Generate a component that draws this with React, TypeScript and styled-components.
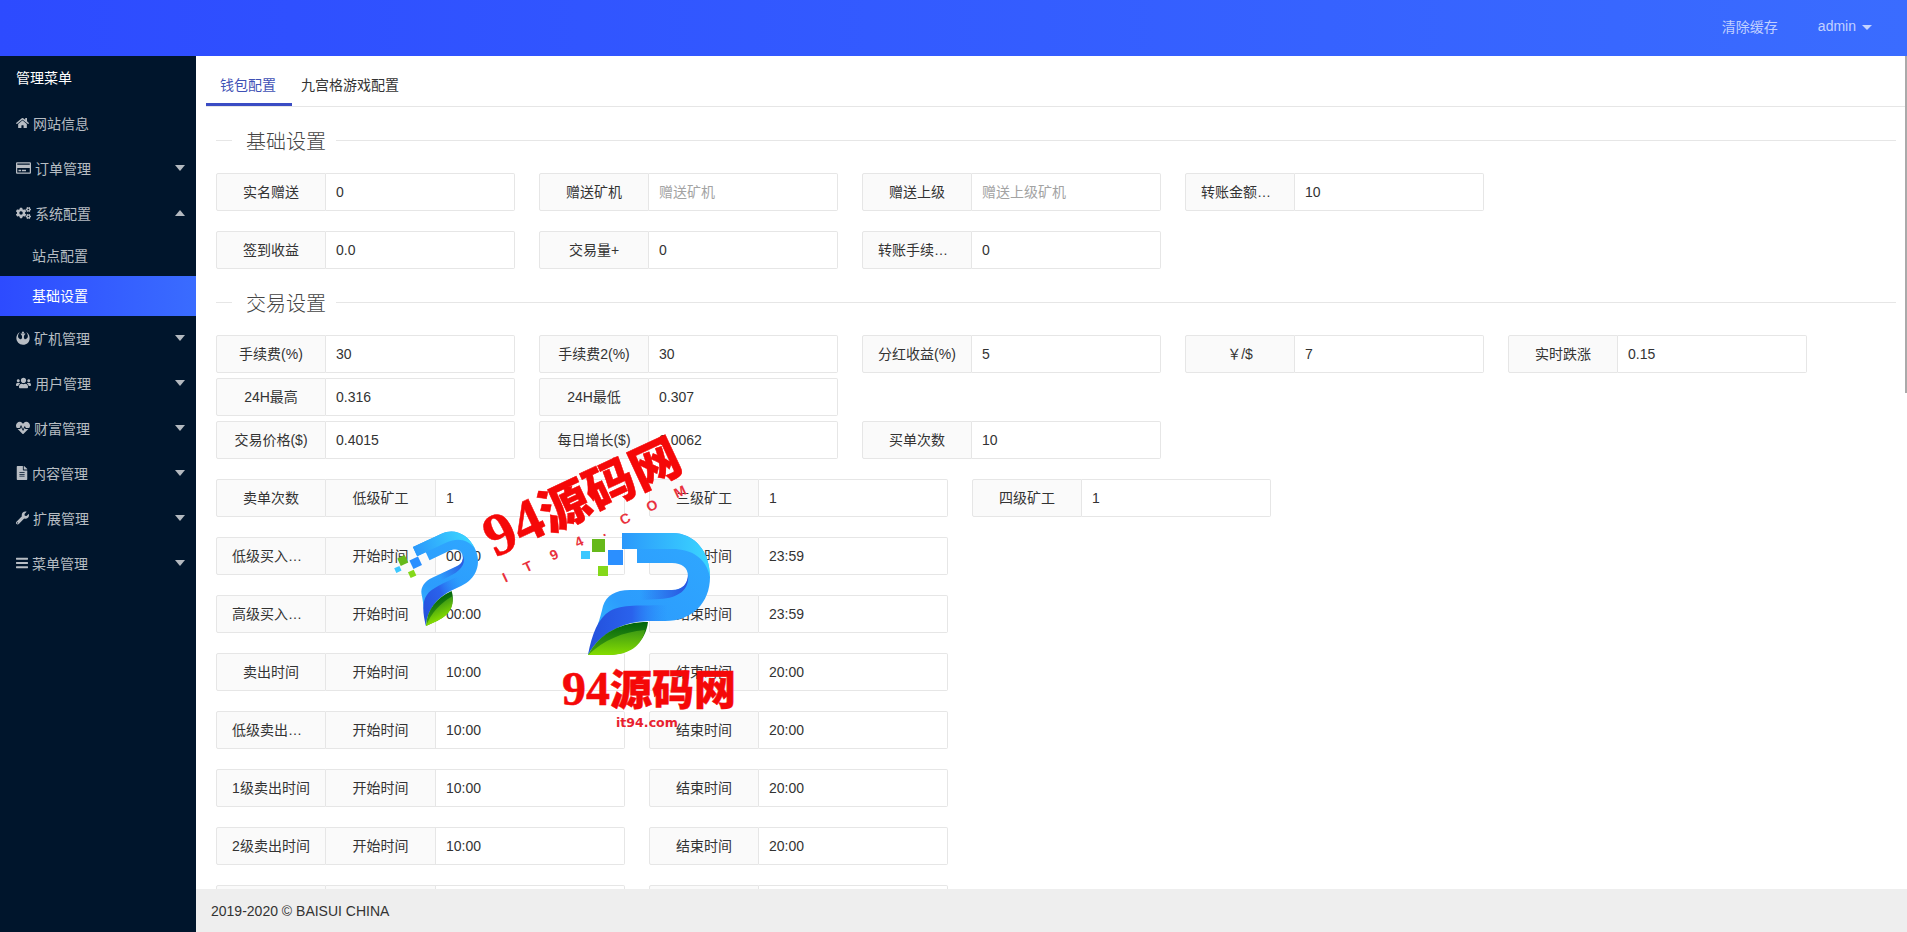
import React from "react";
import styled, { createGlobalStyle } from "styled-components";
import {
  FaHome,
  FaRegCreditCard,
  FaCogs,
  FaRebel,
  FaUsers,
  FaHeartbeat,
  FaFileAlt,
  FaWrench,
  FaBars,
} from "react-icons/fa";

const Global = createGlobalStyle`
  html, body, #root { margin: 0; padding: 0; height: 100%; overflow: hidden; }
  body {
    font-family: "Liberation Sans", "Noto Sans CJK SC", sans-serif;
    font-size: 14px;
    color: #333;
    background: #fff;
  }
  * { box-sizing: border-box; }
`;

const Page = styled.div`
  position: relative;
  display: flex;
  flex-direction: column;
  height: 932px;
  overflow: hidden;
`;

const Header = styled.header`
  flex: 0 0 56px;
  display: flex;
  justify-content: flex-end;
  align-items: flex-start;
  padding-right: 35px;
  background: linear-gradient(90deg, #2d4bff, #3a6cff);
`;

const HeaderLink = styled.a<{ $gap?: number }>`
  display: flex;
  align-items: center;
  height: 52px;
  margin-left: ${(p) => p.$gap ?? 0}px;
  color: rgba(255, 255, 255, 0.7);
`;

const Caret = styled.i<{ $up?: boolean }>`
  display: block;
  width: 0;
  height: 0;
  border-left: 5.5px solid transparent;
  border-right: 5.5px solid transparent;
  border-top: ${(p) => (p.$up ? "0" : "6px solid rgba(255,255,255,.7)")};
  border-bottom: ${(p) => (p.$up ? "6px solid rgba(255,255,255,.7)" : "0")};
`;

const HeaderCaret = styled(Caret)`
  margin: 2px 0 0 6px;
  border-left-width: 5px;
  border-right-width: 5px;
  border-top-width: 5px;
`;

const Body = styled.div`
  flex: 1;
  min-height: 0;
  display: flex;
`;

const Sidebar = styled.nav`
  flex: 0 0 196px;
  background: #00152c;
`;

const SideTitle = styled.div`
  height: 45px;
  line-height: 45px;
  padding-left: 16px;
  color: #fff;
`;

const SideItem = styled.div`
  display: flex;
  align-items: center;
  height: 45px;
  padding: 0 11px 2px 16px;
  color: rgba(255, 255, 255, 0.72);
`;

const SideIcon = styled.span<{ $w: number }>`
  flex: 0 0 ${(p) => p.$w}px;
  margin-right: 4px;
  display: flex;
  align-items: center;
  justify-content: flex-start;
  font-size: ${(p) => p.$w}px;
  svg { width: ${(p) => p.$w}px; height: 14px; }
`;

const SideLabel = styled.span`
  flex: 1;
`;

const SubItem = styled.div<{ $active?: boolean }>`
  height: 40px;
  line-height: 40px;
  padding-left: 32px;
  color: ${(p) => (p.$active ? "#fff" : "rgba(255,255,255,.72)")};
  background: ${(p) => (p.$active ? "linear-gradient(90deg,#2d4bff,#3a6cff)" : "transparent")};
`;

const Main = styled.main`
  flex: 1;
  min-width: 0;
  display: flex;
  flex-direction: column;
`;

const Content = styled.div`
  flex: 1;
  min-height: 0;
  overflow: hidden;
  padding-left: 10px;
`;

const TabBar = styled.div`
  display: flex;
  height: 51px;
  padding-top: 10px;
  margin-right: 2px;
  border-bottom: 1px solid #e6e6e6;
`;

const Tab = styled.div<{ $active?: boolean }>`
  height: 40px;
  line-height: 38px;
  padding: ${(p) => (p.$active ? "0 16px 0 14px" : "0 10px 0 9px")};
  color: ${(p) => (p.$active ? "#3f51b5" : "#333")};
  border-bottom: ${(p) => (p.$active ? "3px solid #3a4cc4" : "0")};
  border-radius: 2px 2px 0 0;
`;

const Form = styled.div`
  padding: 0 11px 0 10px;
`;

const SectionTitle = styled.div`
  display: flex;
  align-items: center;
  height: 28px;
  margin: 19px 0;
  font-size: 20px;
  font-weight: 300;
  color: #444;
  &::before {
    content: "";
    flex: 0 0 16px;
    height: 1px;
    margin-right: 14px;
    background: #e6e6e6;
  }
  &::after {
    content: "";
    flex: 1;
    height: 1px;
    margin-left: 10px;
    background: #e6e6e6;
  }
`;

const Row = styled.div<{ $after?: number }>`
  display: flex;
  gap: 24px;
  height: 38px;
  margin-bottom: ${(p) => p.$after ?? 20}px;
`;

const FieldBox = styled.div`
  display: flex;
  height: 38px;
`;

const Label = styled.label`
  flex: 0 0 110px;
  width: 110px;
  height: 38px;
  line-height: 36px;
  padding: 0 15px;
  text-align: center;
  white-space: nowrap;
  overflow: hidden;
  text-overflow: ellipsis;
  color: #333;
  background: #fafafa;
  border: 1px solid #e6e6e6;
  border-radius: 2px 0 0 2px;
  & + & {
    border-left: 0;
    border-radius: 0;
  }
`;

const Input = styled.input`
  width: 189px;
  height: 38px;
  padding: 0 10px;
  font: inherit;
  color: #333;
  background: #fff;
  border: 1px solid #e6e6e6;
  border-left: 0;
  border-radius: 0 2px 2px 0;
  outline: none;
  &::placeholder { color: #a3a3a3; opacity: 1; }
`;

const Footer = styled.footer`
  flex: 0 0 43px;
  display: flex;
  align-items: center;
  padding-left: 15px;
  background: #eeeeee;
  color: #333;
`;

const ScrollThumb = styled.div`
  position: absolute;
  top: 56px;
  right: 0;
  width: 2px;
  height: 337px;
  background: #aaa;
`;

const Watermark = styled.svg`
  position: absolute;
  left: 0;
  top: 0;
  pointer-events: none;
`;

const RedTitle = styled.text`
  font-family: "Liberation Serif", "Noto Sans CJK SC", serif;
  font-weight: 900;
  fill: #f50808;
  stroke: #f50808;
  stroke-width: 0.5px;
`;

const ArcLetter = styled.text`
  font-family: "Liberation Sans", sans-serif;
  font-size: 14px;
  font-weight: 700;
  fill: #e9323e;
  text-anchor: middle;
`;

const SiteUrl = styled.text`
  font-family: "DejaVu Sans", sans-serif;
  font-size: 12.6px;
  font-weight: 700;
  fill: #e8222f;
`;

type Fd = { l: string; sub?: string; v?: string; ph?: string };

const Field = ({ l, sub, v, ph }: Fd) => (
  <FieldBox>
    <Label>{l}</Label>
    {sub && <Label>{sub}</Label>}
    <Input readOnly value={v ?? ""} placeholder={ph} />
  </FieldBox>
);

const basic: Fd[][] = [
  [
    { l: "实名赠送", v: "0" },
    { l: "赠送矿机", ph: "赠送矿机" },
    { l: "赠送上级", ph: "赠送上级矿机" },
    { l: "转账金额倍数", v: "10" },
  ],
  [
    { l: "签到收益", v: "0.0" },
    { l: "交易量+", v: "0" },
    { l: "转账手续费率", v: "0" },
  ],
];

const trade: { after: number; f: Fd[] }[] = [
  {
    after: 5,
    f: [
      { l: "手续费(%)", v: "30" },
      { l: "手续费2(%)", v: "30" },
      { l: "分红收益(%)", v: "5" },
      { l: "￥/$", v: "7" },
      { l: "实时跌涨", v: "0.15" },
    ],
  },
  { after: 5, f: [{ l: "24H最高", v: "0.316" }, { l: "24H最低", v: "0.307" }] },
  {
    after: 20,
    f: [
      { l: "交易价格($)", v: "0.4015" },
      { l: "每日增长($)", v: "0.0062" },
      { l: "买单次数", v: "10" },
    ],
  },
  {
    after: 20,
    f: [
      { l: "卖单次数", sub: "低级矿工", v: "1" },
      { l: "三级矿工", v: "1" },
      { l: "四级矿工", v: "1" },
    ],
  },
];

const timeRows: [string, string, string][] = [
  ["低级买入时间", "00:00", "23:59"],
  ["高级买入时间", "00:00", "23:59"],
  ["卖出时间", "10:00", "20:00"],
  ["低级卖出时间", "10:00", "20:00"],
  ["1级卖出时间", "10:00", "20:00"],
  ["2级卖出时间", "10:00", "20:00"],
];

const nav1 = [
  { t: "网站信息", I: FaHome, w: 13, caret: false },
  { t: "订单管理", I: FaRegCreditCard, w: 15, caret: true },
];
const nav2 = [
  { t: "矿机管理", I: FaRebel, w: 14, caret: true },
  { t: "用户管理", I: FaUsers, w: 15, caret: true },
  { t: "财富管理", I: FaHeartbeat, w: 14, caret: true },
  { t: "内容管理", I: FaFileAlt, w: 12, caret: true },
  { t: "扩展管理", I: FaWrench, w: 13, caret: true },
  { t: "菜单管理", I: FaBars, w: 12, caret: true },
];

type NavT = (typeof nav1)[number];
const NavRow = ({ t, I, w, caret, up }: NavT & { up?: boolean }) => (
  <SideItem>
    <SideIcon $w={w}>
      <I />
    </SideIcon>
    <SideLabel>{t}</SideLabel>
    {caret && <Caret $up={up} />}
  </SideItem>
);

const arc: [string, number, number][] = [
  ["I", 507, 582],
  ["T", 530, 571],
  ["9", 556, 559],
  ["4", 581, 546],
  [".", 605, 536],
  ["C", 627, 523],
  ["O", 654, 510],
  ["M", 682, 496],
];

const Logo = () => (
  <g>
    <path
      d="M588 655C594 635 600 620 603 606C606 596 615 590 630 590H672C683 590 688 583 688 576C688 568 682 563 672 563H637V549H622V533H672C695 533 710 552 710 577C710 603 692 621 665 621H648C625 621 600 632 588 655Z"
      fill="url(#wmBody)"
    />
    <path d="M622 533H672C695 533 710 552 710 577C706 558 692 549 672 549H622Z" fill="url(#wmTop)" />
    <path d="M640 590H672C683 590 688 583 688 574C690 590 678 598 660 599L640 600Z" fill="url(#wmFold)" />
    <path d="M588 655C592 634 598 618 610 611C622 604 640 606 668 605V621H648C625 621 600 632 588 655Z" fill="url(#wmDeep)" />
    <path d="M588 655C600 632 622 622 648 622C646 640 632 655 608 655Z" fill="url(#wmLeaf)" />
    <path d="M588 655C604 640 622 632 645 630C642 645 630 655 608 655Z" fill="url(#wmLeaf2)" />
    <rect x="592" y="539" width="13" height="13" fill="#66b91a" />
    <rect x="608" y="550" width="15" height="15" fill="#2b8fff" />
    <rect x="581" y="551" width="9" height="8" fill="#3cc8ff" />
    <rect x="598" y="566" width="10" height="10" fill="#84d81a" />
  </g>
);

export default function App() {
  return (
    <Page>
      <Global />
      <Header>
        <HeaderLink>清除缓存</HeaderLink>
        <HeaderLink $gap={40}>
          admin
          <HeaderCaret />
        </HeaderLink>
      </Header>
      <Body>
        <Sidebar>
          <SideTitle>管理菜单</SideTitle>
          {nav1.map((n) => (
            <NavRow key={n.t} {...n} />
          ))}
          <NavRow t="系统配置" I={FaCogs} w={15} caret up />
          <SubItem>站点配置</SubItem>
          <SubItem $active>基础设置</SubItem>
          {nav2.map((n) => (
            <NavRow key={n.t} {...n} />
          ))}
        </Sidebar>
        <Main>
          <Content>
            <TabBar>
              <Tab $active>钱包配置</Tab>
              <Tab>九宫格游戏配置</Tab>
            </TabBar>
            <Form>
              <SectionTitle>基础设置</SectionTitle>
              {basic.map((r, i) => (
                <Row key={i} $after={i === 1 ? 0 : 20}>
                  {r.map((f) => (
                    <Field key={f.l} {...f} />
                  ))}
                </Row>
              ))}
              <SectionTitle>交易设置</SectionTitle>
              {trade.map((r, i) => (
                <Row key={i} $after={r.after}>
                  {r.f.map((f) => (
                    <Field key={f.l} {...f} />
                  ))}
                </Row>
              ))}
              {timeRows.map(([l, s, e]) => (
                <Row key={l}>
                  <Field l={l} sub="开始时间" v={s} />
                  <Field l="结束时间" v={e} />
                </Row>
              ))}
              <Row>
                <Field l=" " sub=" " />
                <Field l=" " />
              </Row>
            </Form>
          </Content>
          <Footer>2019-2020 © BAISUI CHINA</Footer>
        </Main>
      </Body>
      <ScrollThumb />
      <Watermark width="1907" height="932" viewBox="0 0 1907 932">
        <defs>
          <linearGradient id="wmBody" x1="0" y1="1" x2="1" y2="0">
            <stop offset="0" stopColor="#37c6ff" />
            <stop offset="0.35" stopColor="#2c9cfd" />
            <stop offset="1" stopColor="#2fa8ff" />
          </linearGradient>
          <linearGradient id="wmTop" x1="0" y1="0" x2="1" y2="0">
            <stop offset="0" stopColor="#2b98fb" />
            <stop offset="1" stopColor="#3bd6ff" />
          </linearGradient>
          <linearGradient id="wmFold" x1="0" y1="0" x2="1" y2="0">
            <stop offset="0" stopColor="#2a52df" stopOpacity="0" />
            <stop offset="1" stopColor="#2a52df" />
          </linearGradient>
          <linearGradient id="wmDeep" x1="0" y1="0" x2="1" y2="0">
            <stop offset="0" stopColor="#2450dc" />
            <stop offset="0.55" stopColor="#2a62ec" />
            <stop offset="1" stopColor="#2a8cfb" stopOpacity="0" />
          </linearGradient>
          <linearGradient id="wmLeaf" x1="0" y1="0" x2="0" y2="1">
            <stop offset="0" stopColor="#00640d" />
            <stop offset="1" stopColor="#4aa50f" />
          </linearGradient>
          <linearGradient id="wmLeaf2" x1="0" y1="0" x2="0" y2="1">
            <stop offset="0" stopColor="#3d9a14" />
            <stop offset="1" stopColor="#84dc00" />
          </linearGradient>
          <g id="wmLogo">
            <Logo />
          </g>
        </defs>
        <use href="#wmLogo" />
        <use href="#wmLogo" transform="translate(426 626) rotate(-25) scale(.632) translate(-588 -655)" />
        <RedTitle x="0" y="0" fontSize="50" transform="translate(495 558) rotate(-25)">
          <tspan fontSize="60">94</tspan>源码网
        </RedTitle>
        <RedTitle x="562" y="705" fontSize="42">
          <tspan fontSize="48">94</tspan>源码网
        </RedTitle>
        {arc.map(([c, x, y]) => (
          <ArcLetter key={x} transform={`translate(${x} ${y}) rotate(-25)`}>
            {c}
          </ArcLetter>
        ))}
        <SiteUrl x="616" y="727">
          it94.com
        </SiteUrl>
      </Watermark>
    </Page>
  );
}
